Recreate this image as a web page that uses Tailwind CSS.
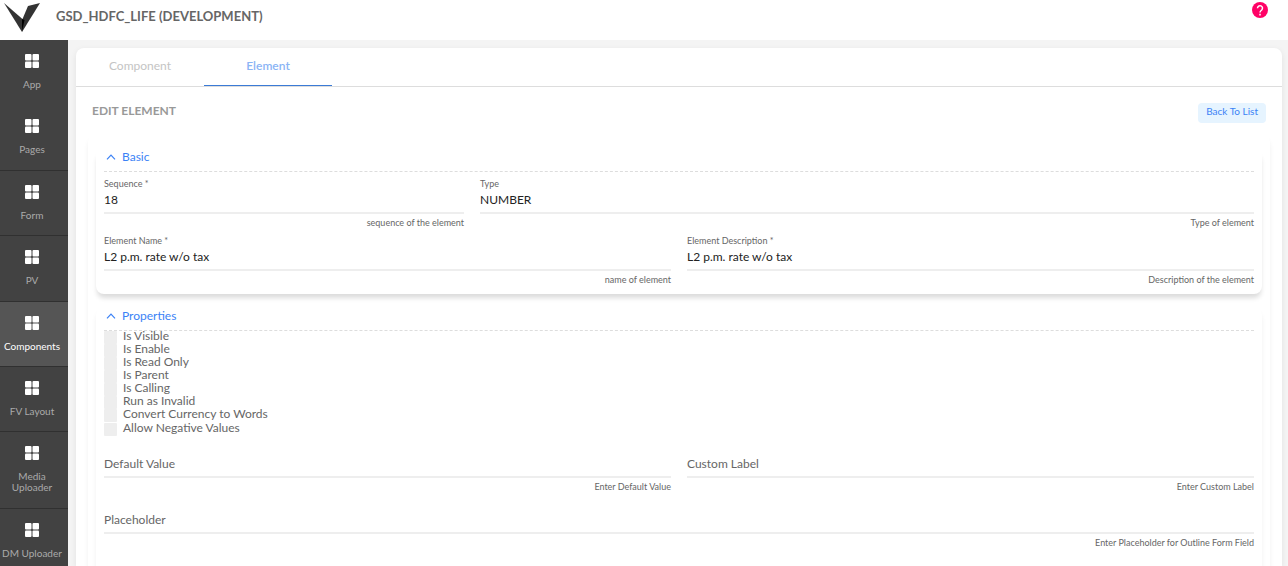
<!DOCTYPE html>
<html lang="en">
<head>
  <meta charset="UTF-8">
  <meta name="viewport" content="width=device-width, initial-scale=1.0">
  <title>GSD_HDFC_LIFE - Edit Element</title>
  <script src="https://cdn.jsdelivr.net/npm/@tailwindcss/browser@4"></script>
</head>
<body class="flex flex-col h-screen overflow-hidden bg-[#f4f4f4] font-['Lato',sans-serif] text-xs text-[#666]">
  <svg class="hidden">
    <symbol id="grid" viewBox="0 0 14 14">
      <rect x="0" y="0" width="6.500" height="6.500" rx="1" /><rect x="7.500" y="0" width="6.500" height="6.500" rx="1" />
      <rect x="0" y="7.500" width="6.500" height="6.500" rx="1" /><rect x="7.500" y="7.500" width="6.500" height="6.500" rx="1" />
    </symbol>
    <symbol id="chevron" viewBox="0 0 10 6">
      <path d="M1 5.3 5 1.2 9 5.3" fill="none" stroke="currentColor" stroke-width="1.2" />
    </symbol>
  </svg>

  <header class="flex items-start justify-between h-10 shrink-0 bg-white">
    <div class="flex">
      <svg class="w-10 h-8 ml-1 mr-3" viewBox="0 0 40 32">
        <path d="M0 3 19 19.500 18 32Z" fill="#333" />
        <path d="M36 3 24 6 18.500 19 18 32Z" fill="#333" />
        <path d="M18 19 20.500 20 18 32Z" fill="#000" />
      </svg>
      <h1 class="pt-2 text-[13px] leading-4 font-bold">GSD_HDFC_LIFE (DEVELOPMENT)</h1>
    </div>
    <button type="button" aria-label="Help" class="mt-0.5 mr-5">
      <svg class="size-4" viewBox="0 0 16 16">
        <circle cx="8" cy="8" r="8" fill="#ff0266" />
        <path d="M5.500 6.200a2.500 2.500 0 1 1 4.200 1.800C8.700 8.800 8 9.200 8 10.500M8 11.800v1.600" fill="none" stroke="#fff" stroke-width="1.500" />
      </svg>
    </button>
  </header>

  <div class="flex flex-1 min-h-0">
    <nav class="w-17 shrink-0 overflow-hidden bg-[#424242] text-center text-[10px] leading-[11px] text-[#aaa]">
      <a href="#" class="block pr-1 pt-3.5 pb-[15px]"><svg class="size-3.5 mx-auto mb-[11px] fill-white"><use href="#grid" /></svg>App</a>
      <a href="#" class="block pr-1 pt-3.5 pb-[15px] border-b border-[#303030]"><svg class="size-3.5 mx-auto mb-[11px] fill-white"><use href="#grid" /></svg>Pages</a>
      <a href="#" class="block pr-1 pt-3.5 pb-3.5 border-b border-[#303030]"><svg class="size-3.5 mx-auto mb-[11px] fill-white"><use href="#grid" /></svg>Form</a>
      <a href="#" class="block pr-1 pt-3.5 pb-[15px] border-b border-[#303030]"><svg class="size-3.5 mx-auto mb-[11px] fill-white"><use href="#grid" /></svg>PV</a>
      <a href="#" class="block pr-1 pt-3.5 pb-3.5 border-b border-[#303030] bg-[#555] text-white"><svg class="size-3.5 mx-auto mb-[11px] fill-white"><use href="#grid" /></svg>Components</a>
      <a href="#" class="block pr-1 pt-3.5 pb-3.5 border-b border-[#303030]"><svg class="size-3.5 mx-auto mb-[11px] fill-white"><use href="#grid" /></svg>FV Layout</a>
      <a href="#" class="block pr-1 pt-3.5 pb-[15px] border-b border-[#303030]"><svg class="size-3.5 mx-auto mb-[11px] fill-white"><use href="#grid" /></svg>Media<br>Uploader</a>
      <a href="#" class="block pr-1 pt-3.5 pb-3.5 border-b border-[#303030]"><svg class="size-3.5 mx-auto mb-[11px] fill-white"><use href="#grid" /></svg>DM Uploader</a>
    </nav>

    <main class="flex-1 mt-2 ml-2 mr-1.5 rounded-t-lg bg-white shadow-[0_2px_6px_rgba(0,0,0,0.08)]">
      <div class="flex h-[39px] border-b border-[#ddd]">
        <button type="button" class="w-32 pb-0.5 text-[#c4c4c4]">Component</button>
        <button type="button" class="w-32 pb-0.5 border-b border-[#3b7bd6] font-semibold text-[#8ab4f5]">Element</button>
      </div>
      <div class="flex items-start justify-between px-4 pt-4">
        <h2 class="leading-4 font-bold text-[#999]">EDIT ELEMENT</h2>
        <button type="button" class="h-5 px-2 pb-0.5 rounded-sm bg-[#e6f4ff] text-[10px] text-[#3b82f6]">Back To List</button>
      </div>

      <form class="mx-3 mt-3 px-2 pt-3.5 rounded-lg shadow-[0_4px_5px_rgba(0,0,0,0.06)]">
        <section class="px-2 pb-2 rounded-lg shadow-[0_5px_5px_-1px_rgba(0,0,0,0.14)]">
          <button type="button" class="flex items-center gap-1.5 w-full h-[23px] pl-0.5 pb-[7px] border-b border-dashed border-[#ddd] text-[#3b82f6]"><svg class="w-2.5 h-1.5"><use href="#chevron" /></svg>Basic</button>
          <div class="grid grid-cols-[20fr_43fr] gap-x-4 pt-1.5">
            <div>
              <label for="sequence" class="block text-[9px] leading-3">Sequence *</label>
              <input type="text" id="sequence" value="18" class="block w-full h-6 pb-1 border-b-2 border-[#eee] text-[#222] outline-none" required>
              <p class="mt-[3px] text-right text-[9px] leading-3">sequence of the element</p>
            </div>
            <div>
              <label for="type" class="block text-[9px] leading-3">Type</label>
              <input type="text" id="type" value="NUMBER" class="block w-full h-6 pb-1 border-b-2 border-[#eee] text-[#222] outline-none">
              <p class="mt-[3px] text-right text-[9px] leading-3">Type of element</p>
            </div>
          </div>
          <div class="grid grid-cols-2 gap-x-4 pt-1.5">
            <div>
              <label for="name" class="block text-[9px] leading-3">Element Name *</label>
              <input type="text" id="name" value="L2 p.m. rate w/o tax" class="block w-full h-6 pb-1 border-b-2 border-[#eee] text-[#222] outline-none" required>
              <p class="mt-[3px] text-right text-[9px] leading-3">name of element</p>
            </div>
            <div>
              <label for="description" class="block text-[9px] leading-3">Element Description *</label>
              <input type="text" id="description" value="L2 p.m. rate w/o tax" class="block w-full h-6 pb-1 border-b-2 border-[#eee] text-[#222] outline-none" required>
              <p class="mt-[3px] text-right text-[9px] leading-3">Description of the element</p>
            </div>
          </div>
        </section>

        <section class="mt-3.5 px-2 pb-8 rounded-lg shadow-[0_4px_5px_rgba(0,0,0,0.06)]">
          <button type="button" class="flex items-center gap-1.5 w-full h-[23px] pl-0.5 pb-[7px] border-b border-dashed border-[#ddd] text-[#3b82f6]"><svg class="w-2.5 h-1.5"><use href="#chevron" /></svg>Properties</button>
          <div class="flex flex-col items-start leading-[10px]">
            <label class="flex gap-1.5"><input type="checkbox" class="appearance-none size-[13px] rounded-[1px] bg-[#eee] checked:bg-[#3b82f6]">Is Visible</label>
            <label class="flex gap-1.5"><input type="checkbox" class="appearance-none size-[13px] rounded-[1px] bg-[#eee] checked:bg-[#3b82f6]">Is Enable</label>
            <label class="flex gap-1.5"><input type="checkbox" class="appearance-none size-[13px] rounded-[1px] bg-[#eee] checked:bg-[#3b82f6]">Is Read Only</label>
            <label class="flex gap-1.5"><input type="checkbox" class="appearance-none size-[13px] rounded-[1px] bg-[#eee] checked:bg-[#3b82f6]">Is Parent</label>
            <label class="flex gap-1.5"><input type="checkbox" class="appearance-none size-[13px] rounded-[1px] bg-[#eee] checked:bg-[#3b82f6]">Is Calling</label>
            <label class="flex gap-1.5"><input type="checkbox" class="appearance-none size-[13px] rounded-[1px] bg-[#eee] checked:bg-[#3b82f6]">Run as Invalid</label>
            <label class="flex gap-1.5"><input type="checkbox" class="appearance-none size-[13px] rounded-[1px] bg-[#eee] checked:bg-[#3b82f6]">Convert Currency to Words</label>
            <label class="flex gap-1.5 mt-px"><input type="checkbox" class="appearance-none size-[13px] rounded-[1px] bg-[#eee] checked:bg-[#3b82f6]">Allow Negative Values</label>
          </div>
          <!-- empty fields: the label rests on the input line -->
          <div class="grid grid-cols-2 gap-x-4 pt-[18px]">
            <div class="relative">
              <label for="defaultValue" class="absolute top-0 left-0 leading-5">Default Value</label>
              <input type="text" id="defaultValue" class="block w-full h-6 border-b-2 border-[#eee] text-[#222] outline-none">
              <p class="mt-[3px] text-right text-[9px] leading-3">Enter Default Value</p>
            </div>
            <div class="relative">
              <label for="customLabel" class="absolute top-0 left-0 leading-5">Custom Label</label>
              <input type="text" id="customLabel" class="block w-full h-6 border-b-2 border-[#eee] text-[#222] outline-none">
              <p class="mt-[3px] text-right text-[9px] leading-3">Enter Custom Label</p>
            </div>
          </div>
          <div class="pt-[17px]">
            <div class="relative">
              <label for="placeholder" class="absolute top-0 left-0 leading-5">Placeholder</label>
              <input type="text" id="placeholder" class="block w-full h-6 border-b-2 border-[#eee] text-[#222] outline-none">
              <p class="mt-[3px] text-right text-[9px] leading-3">Enter Placeholder for Outline Form Field</p>
            </div>
          </div>
        </section>
      </form>
    </main>
  </div>
</body>
</html>
